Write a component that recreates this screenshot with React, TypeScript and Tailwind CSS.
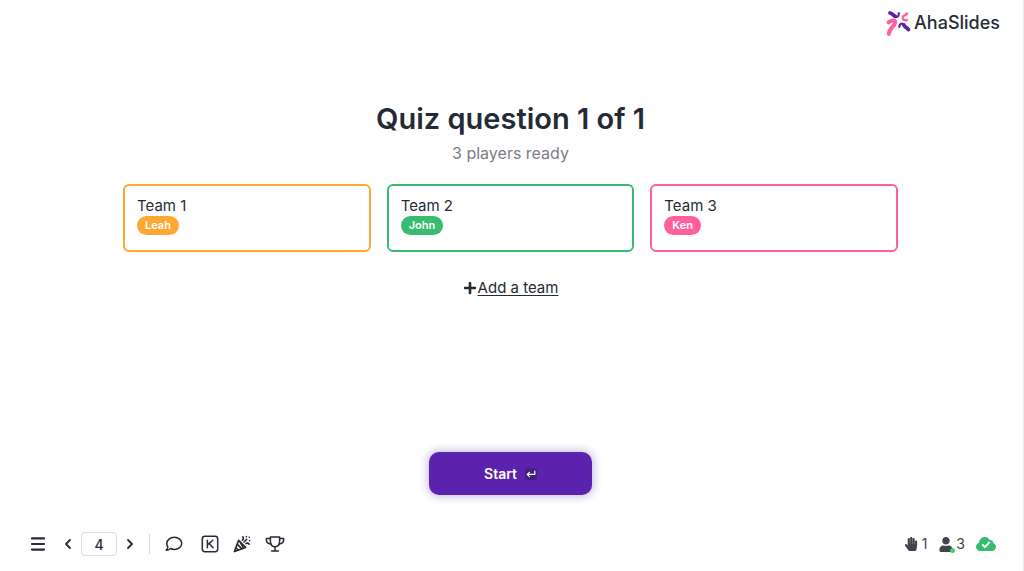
import { FaBars, FaHandPaper, FaPlus, FaUser } from 'react-icons/fa'

const teams = [
    { name: 'Team 1', player: 'Leah', border: 'border-[#ffa733]', badge: 'bg-[#ffa733]' },
    { name: 'Team 2', player: 'John', border: 'border-[#38bc70]', badge: 'bg-[#38bc70]' },
    { name: 'Team 3', player: 'Ken', border: 'border-[#ff5f9b]', badge: 'bg-[#ff5f9b]' },
]

const stroke = {
    fill: 'none',
    stroke: 'currentColor',
    strokeLinecap: 'round',
    strokeLinejoin: 'round',
} as const

function LogoMark() {
    return (
        <svg viewBox="0 0 25 27" className="h-[27px] w-[25px]" fill="none" strokeLinecap="round" aria-hidden="true">
            <g stroke="#5b23ad">
                <path d="M4 3C6.4 3.4 7.4 5.6 9.4 6.4" strokeWidth="3.8" />
                <path d="M9.4 6.6C11.6 7.8 13.2 6 12.8 3" strokeWidth="2.2" />
                <path d="M13.4 17C13 14 16 12.8 17.6 14.6" strokeWidth="2.2" />
                <path d="M17.8 15C18.6 17.4 21 17 22.4 19.6" strokeWidth="3.8" />
            </g>
            <g stroke="#ff5f9b">
                <path d="M2.6 12.4C5 9.8 9.2 9.8 9.2 12.4C9.2 16 3.2 17.6 2.8 24" strokeWidth="4" />
                <path d="M21 3.4C19.6 6.2 16.8 4.8 16.6 7.6C16.6 9.8 18.6 10.6 20.8 10" strokeWidth="2.4" />
            </g>
        </svg>
    )
}

function ChevronIcon({ next = false }: { next?: boolean }) {
    return (
        <svg viewBox="0 0 8 12" className="h-3 w-2" {...stroke} strokeWidth="1.8" aria-hidden="true">
            <path d={next ? 'M2 2L6 6L2 10' : 'M6 2L2 6L6 10'} />
        </svg>
    )
}

function MenuIcon() {
    return (
        <svg viewBox="0 0 16 16" className="size-4" {...stroke} strokeWidth="2.2" aria-hidden="true">
            <path d="M2 2.4H14M2 8H14M2 13.6H14" />
        </svg>
    )
}

function CommentIcon() {
    return (
        <svg viewBox="0 0 18 16" className="h-4 w-[18px]" {...stroke} strokeWidth="1.5" aria-hidden="true">
            <path d="M9.3 1.3C13.5 1.3 16.7 4 16.7 7.4S13.5 13.4 9.3 13.4C7.8 13.4 6.5 13.1 5.4 12.5C4.3 13.5 2.9 14.2 1.2 14.3C2 13.3 2.7 12.2 2.9 11C2.2 10 1.8 8.8 1.8 7.4C1.8 4 5.1 1.3 9.3 1.3Z" />
        </svg>
    )
}

function KeyboardIcon() {
    return (
        <svg viewBox="0 0 18 18" className="size-[18px]" {...stroke} strokeWidth="1.5" aria-hidden="true">
            <rect x="1.3" y="1.3" width="15.4" height="15.4" rx="2.6" />
            <path d="M6.4 5.2V12.8M11.8 5.2L6.6 9.8M8.2 8.4L12 12.8" />
        </svg>
    )
}

function ConfettiIcon() {
    return (
        <svg viewBox="0 0 18 18" className="size-[18px]" {...stroke} strokeWidth="1.6" aria-hidden="true">
            <path d="M5.6 5.4L1.4 16.6L12.6 12.4Z" />
            <path d="M4.4 9.4L8.6 13.6M3 12.8L5.2 15M7.4 7.6L10.4 12.8" />
            <path d="M9.4 5.2C10.4 4.4 10.6 3 9.8 1.8M11 7L13.6 4.4M12.8 8.6C14 7.8 15.4 8.2 16.2 9.2M13.4 1.6V1.7M16.6 5.6V5.7M16.2 2.2V2.3" />
        </svg>
    )
}

function TrophyIcon() {
    return (
        <svg viewBox="0 0 20 16" className="h-4 w-5" {...stroke} strokeWidth="1.5" aria-hidden="true">
            <path d="M5.4 1H14.6V5.6C14.6 8.8 12.8 10.8 10 10.8S5.4 8.8 5.4 5.6Z" />
            <path d="M5.2 2.4H1.4V4C1.4 6.2 3.4 7.8 6 8M14.8 2.4H18.6V4C18.6 6.2 16.6 7.8 14 8M10 11V14.8M6.6 14.9H13.4" />
        </svg>
    )
}

function CloudCheckIcon() {
    return (
        <svg viewBox="0 0 20 14" className="h-[14px] w-5" aria-label="Saved" role="img">
            <path
                fill="#38bc70"
                d="M4.4 14C1.9 14 0 12.2 0 9.8C0 7.9 1.3 6.3 3 5.8C3.1 2.5 5.6 0 8.8 0C11 0 12.8 1.1 13.8 2.9C15.9 2.7 17.2 4 17.3 5.9C18.9 6.4 20 7.9 20 9.8C20 12.2 18.2 14 15.8 14Z"
            />
            <path d="M6.2 7.4L8.9 10.1L13.6 5" fill="none" stroke="#fff" strokeWidth="2" />
        </svg>
    )
}

function Toolbar() {
    return (
        <footer className="flex h-[54px] items-center justify-between pr-[25px] pl-[30px] text-[#252b36]">
            <div className="flex items-center">
                <button type="button" aria-label="Menu">
                    <MenuIcon />
                </button>
                <button type="button" aria-label="Previous slide" className="ml-[18px]">
                    <ChevronIcon />
                </button>
                <input
                    type="text"
                    aria-label="Slide number"
                    defaultValue="4"
                    className="mx-[9px] h-6 w-9 rounded border border-[#dcdce4] text-center text-sm font-medium"
                />
                <button type="button" aria-label="Next slide">
                    <ChevronIcon next />
                </button>
                <span className="mx-[15px] h-5 w-px bg-[#d9d9e0]" />
                <div className="flex items-center gap-[18px]">
                    <button type="button" aria-label="Comments">
                        <CommentIcon />
                    </button>
                    <button type="button" aria-label="Keyboard shortcuts">
                        <KeyboardIcon />
                    </button>
                    <button type="button" aria-label="Celebrate" className="-ml-1">
                        <ConfettiIcon />
                    </button>
                    <button type="button" aria-label="Leaderboard" className="-ml-1">
                        <TrophyIcon />
                    </button>
                </div>
            </div>
            <div className="flex items-center gap-[11px] text-sm text-[#41444f]">
                <span className="flex items-center gap-1">
                    <FaHandPaper className="size-[14px]" />1
                </span>
                <span className="flex items-center gap-[2px]">
                    <span className="relative">
                        <FaUser className="h-[15px] w-4" />
                        <span className="absolute -right-px -bottom-px size-[5px] rounded-full bg-[#4cc76d]" />
                    </span>
                    3
                </span>
                <CloudCheckIcon />
            </div>
        </footer>
    )
}

export default function App() {
    return (
        <div className="flex min-h-screen flex-col border-r border-[#ececef] bg-white pr-0.5 font-['Inter',sans-serif] text-[#252b36]">
            <header className="flex h-[46px] items-center justify-end pr-[21px]">
                <a href="#" className="flex items-center gap-[3px]">
                    <LogoMark />
                    <span className="text-lg font-medium">AhaSlides</span>
                </a>
            </header>

            <main className="flex flex-1 flex-col items-center px-6 pt-[53px] pb-[22px]">
                <h1 className="text-[29px] leading-10 font-semibold">Quiz question 1 of 1</h1>
                <p className="mt-1 text-base leading-5 text-[#7c7d85]">3 players ready</p>

                <div className="mt-[21px] grid w-full max-w-[775px] grid-cols-3 gap-4">
                    {teams.map((team) => (
                        <section
                            key={team.name}
                            className={`flex h-[68px] flex-col items-start rounded-md border-2 px-3 pt-[10px] ${team.border}`}
                        >
                            <h2 className="text-[15px] leading-5">{team.name}</h2>
                            <span className={`rounded-full px-2 text-[11px] leading-[19px] font-semibold text-white ${team.badge}`}>
                                {team.player}
                            </span>
                        </section>
                    ))}
                </div>

                <button type="button" className="mt-6 flex items-center text-[15px] leading-6">
                    <FaPlus className="size-[14px]" />
                    <span className="ml-px underline underline-offset-2">Add a team</span>
                </button>

                <button
                    type="button"
                    className="mt-auto flex h-[43px] w-[163px] items-center justify-center gap-2 rounded-[10px] bg-[#5b23ad] text-sm font-semibold text-white shadow-[0_0_8px_2px_rgba(91,35,173,0.3)]"
                >
                    Start
                    <span className="flex size-3 items-center justify-center rounded-sm bg-[#42207d]">
                        <svg viewBox="0 0 10 8" className="h-2 w-[10px]" {...stroke} strokeWidth="1.2" aria-hidden="true">
                            <path d="M8.8 1V4.4H1.4M3.4 2.4L1.2 4.4L3.4 6.6" />
                        </svg>
                    </span>
                </button>
            </main>

            <Toolbar />
        </div>
    )
}
